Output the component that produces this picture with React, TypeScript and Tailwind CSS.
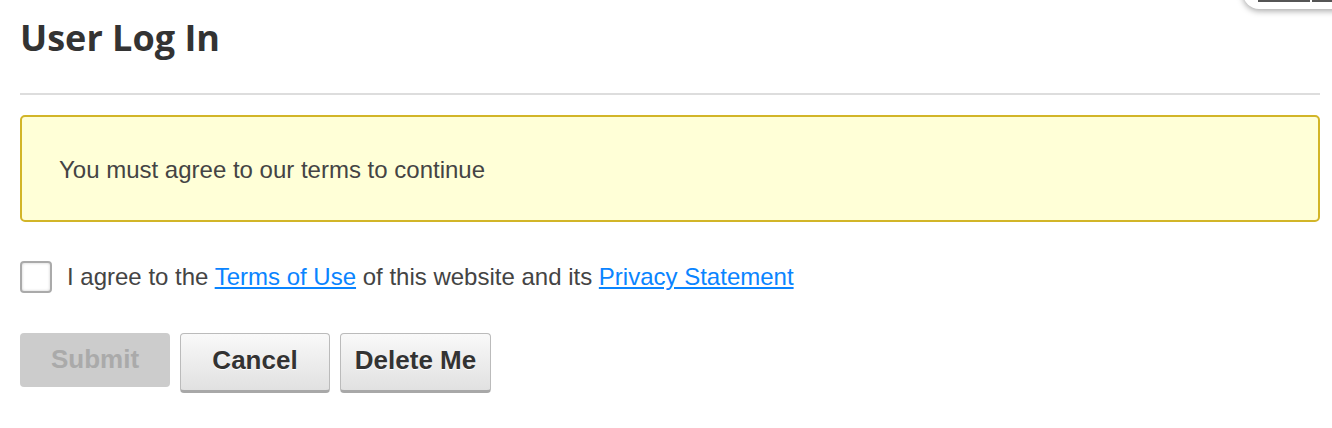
import React from "react";

const App = () => {
  return (
    <div className="relative h-[428px] w-[1332px] overflow-hidden bg-white pl-5 pr-3 font-['Liberation_Sans',Arial,sans-serif] text-[#444]">
      {/* partial popup peeking in at the top right */}
      <div className="absolute -top-10 left-[1243px] h-[49px] w-[120px] rounded-bl-[16px] bg-white shadow-[0_2px_6px_rgba(0,0,0,0.35)]">
        <div className="absolute bottom-[7px] left-[15px] flex gap-[2px]">
          <div className="h-[3px] w-[52px] bg-[#555]" />
          <div className="h-[3px] w-[30px] bg-[#555]" />
        </div>
      </div>

      <h1 className="pt-[13px] font-['Open_Sans',sans-serif] text-[36px] font-bold leading-[50px] text-[#333]">
        User Log In
      </h1>
      <div className="mt-[30px] h-[2px] bg-[#ddd]" />

      <div className="mt-[20px] flex h-[107px] items-center rounded-[5px] border-2 border-[#d2b528] bg-[#ffffd7] pl-[37px] pt-[2px] text-[24px]">
        You must agree to our terms to continue
      </div>

      <label className="mt-[37px] flex items-center text-[24px]">
        <span className="h-[32px] w-[32px] rounded-[4px] border-2 border-[#aaa] bg-white shadow-[inset_0_0_3px_rgba(0,0,0,0.2)]" />
        <span className="ml-[15px]">
          I agree to the{" "}
          <a href="#" className="text-[#0a84ff] underline">
            Terms of Use
          </a>{" "}
          of this website and its{" "}
          <a href="#" className="text-[#0a84ff] underline">
            Privacy Statement
          </a>
        </span>
      </label>

      <div className="mt-[38px] flex items-start gap-[10px]">
        <button
          disabled
          className="h-[54px] w-[150px] rounded-[4px] bg-[#cccccc] pb-[2px] text-[26px] font-bold text-[#aaa]"
        >
          Submit
        </button>
        <button className="h-[60px] w-[150px] rounded-[4px] border border-b-[3px] border-[#bbb] border-b-[#a8a8a8] bg-gradient-to-b from-[#f9f9f9] to-[#e1e1e1] pb-[4px] text-[26px] font-bold text-[#333] [text-shadow:0_1px_0_#fff]">
          Cancel
        </button>
        <button className="h-[60px] w-[151px] rounded-[4px] border border-b-[3px] border-[#bbb] border-b-[#a8a8a8] bg-gradient-to-b from-[#f9f9f9] to-[#e1e1e1] pb-[4px] text-[26px] font-bold text-[#333] [text-shadow:0_1px_0_#fff]">
          Delete Me
        </button>
      </div>
    </div>
  );
};

export default App;
